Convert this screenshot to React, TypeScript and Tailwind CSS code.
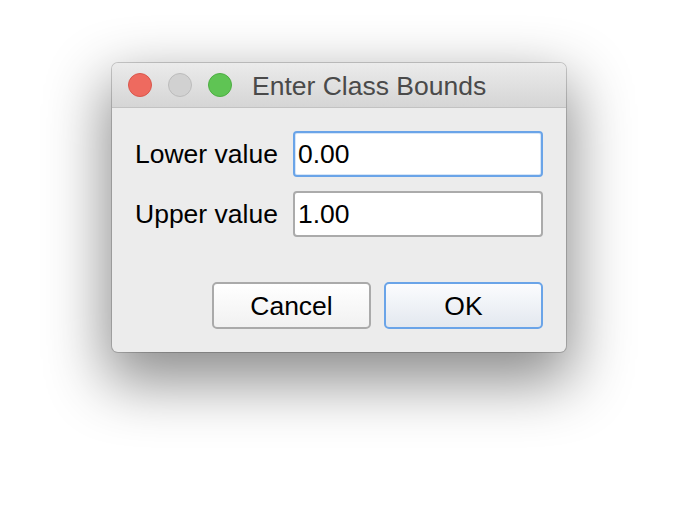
import React from "react";

const font = { fontFamily: '"Liberation Sans", Arial, Helvetica, sans-serif' };

function TrafficLights() {
  return (
    <div className="flex items-center gap-4">
      <div className="w-6 h-6 rounded-full bg-[#ee6a5f] border border-[#d9574c]" />
      <div className="w-6 h-6 rounded-full bg-[#d1d1d1] border border-[#bcbcbc]" />
      <div className="w-6 h-6 rounded-full bg-[#5fc454] border border-[#4dae42]" />
    </div>
  );
}

function Field({ value, focused }: { value: string; focused?: boolean }) {
  return (
    <input
      readOnly
      defaultValue={value}
      style={font}
      className={
        "h-[46px] w-full rounded-[4px] border-2 bg-white pl-[3px] pt-[1px] text-[26.5px] text-black outline-none " +
        (focused
          ? "border-[#6aa4e8] shadow-[inset_0_0_0_1px_#d6e6f8]"
          : "border-[#ababab]")
      }
    />
  );
}

export default function App() {
  return (
    <div className="w-[678px] h-[512px] bg-white pl-[112px] pt-[63px]" style={font}>
      <div className="w-[454px] h-[289px] flex flex-col rounded-[6px] bg-[#ececec] overflow-hidden shadow-[0_0_0_1px_rgba(0,0,0,0.18),0_24px_60px_6px_rgba(0,0,0,0.45)]">
        <div className="h-[45px] flex items-center pl-4 border-b border-[#c2c2c2] bg-gradient-to-b from-[#ebebeb] to-[#d5d5d5]">
          <TrafficLights />
          <span className="ml-5 mt-[3px] text-[26.5px] text-[#4a4a4a] leading-none">Enter Class Bounds</span>
        </div>

        <div className="flex-1 flex flex-col px-[23px] pt-[23px] pb-[23px]">
          <div className="grid grid-cols-[158px_1fr] items-center gap-y-[14px]">
            <span className="pt-[2px] text-[26.5px] text-black">Lower value</span>
            <Field value="0.00" focused />
            <span className="pt-[2px] text-[26.5px] text-black">Upper value</span>
            <Field value="1.00" />
          </div>

          <div className="mt-auto flex justify-end gap-[13px]">
            <button className="w-[159px] h-[47px] pt-[3px] rounded-[5px] border-2 border-[#aaaaaa] bg-gradient-to-b from-[#ffffff] to-[#f1f1f1] text-[26.5px] text-black">
              Cancel
            </button>
            <button className="w-[159px] h-[47px] pt-[3px] rounded-[5px] border-2 border-[#6aa4e8] bg-gradient-to-b from-[#fbfcfe] to-[#e3e8ef] text-[26.5px] text-black">
              OK
            </button>
          </div>
        </div>
      </div>
    </div>
  );
}
